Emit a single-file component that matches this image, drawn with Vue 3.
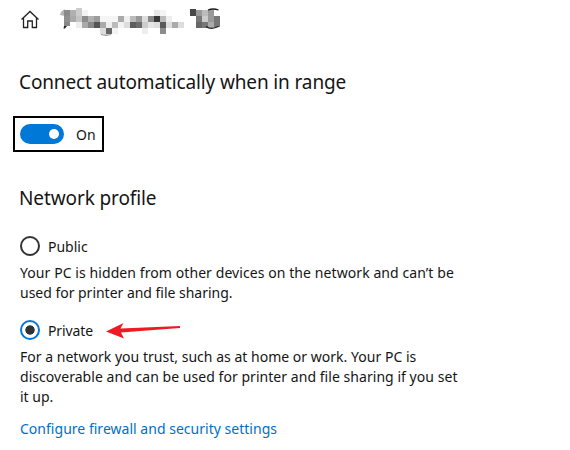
<script setup>
const cells = [
  [64,10,6,6,'#8a8a8a'],[70,10,6,6,'#b0b0b0'],[76,8,6,8,'#ccc'],[82,10,6,6,'#f3f3f3'],
  [64,16,6,6,'#909090'],[70,16,6,6,'#aaa'],[76,16,6,6,'#c4c4c4'],[82,16,6,6,'#8c8c8c'],[88,16,6,6,'#b0b0b0'],[94,16,6,6,'#9c9c9c'],[100,16,18,6,'#f5f5f5'],[118,16,6,6,'#aaa'],
  [64,22,6,4,'#888'],[76,22,6,6,'#eee'],[82,22,6,6,'#aaa'],[88,22,6,6,'#888'],[94,22,6,6,'#555'],[100,22,6,6,'#aaa'],[106,22,6,6,'#eee'],[112,22,6,6,'#bbb'],[118,22,6,6,'#f3f3f3'],
  [100,28,6,6,'#ddd'],[106,28,6,6,'#666'],[112,28,6,6,'#f3f3f3'],
  [124,16,6,6,'#f0f0f0'],[130,16,6,6,'#bbb'],[136,16,6,6,'#999'],[142,16,6,6,'#ddd'],[148,16,6,6,'#888'],[154,16,6,6,'#383838'],[160,16,6,6,'#bbb'],[166,16,6,6,'#eee'],
  [154,10,6,6,'#e8e8e8'],[160,10,6,6,'#f4f4f4'],
  [124,22,6,6,'#ddd'],[130,22,6,6,'#5c5c5c'],[136,22,6,6,'#6c6c6c'],[142,22,6,6,'#ccc'],[148,22,6,6,'#e5e5e5'],[154,22,6,6,'#ddd'],[160,22,6,6,'#5a5a5a'],[166,22,6,6,'#ddd'],[172,22,6,6,'#aaa'],[178,22,6,6,'#ddd'],
  [142,28,6,6,'#eee'],[160,28,6,6,'#8c8c8c'],
  [190,9,6,7,'#484848'],[196,10,6,6,'#999'],[202,10,6,6,'#bbb'],[208,10,6,6,'#999'],
  [196,16,6,6,'#777'],[202,16,6,6,'#ccc'],[208,16,6,6,'#999'],[214,16,6,6,'#777'],
  [196,22,6,6,'#666'],[202,22,6,6,'#777'],[208,22,6,5,'#aaa'],[214,22,6,5,'#777']
]
</script>

<template>
  <main class="page">
    <header class="top">
      <svg width="570" height="42" viewBox="0 0 570 42">
        <path d="M21.5 19.5 30 11.5 38.5 19.5M23.5 18V27.5H27.7V21H32.3V27.5H36.5V18" fill="none" stroke="#222" stroke-width="1.3" />
        <path d="M60 15Q61 10 65 9.5V16Z" fill="#b5b5b5" />
        <path d="M64 26H67L65 28.5H63.5Z" fill="#222" />
        <path d="M101 34.5Q106 36 111 34.5" fill="none" stroke="#999" stroke-width="1.3" />
        <rect v-for="(c, i) in cells" :key="i" :x="c[0]" :y="c[1]" :width="c[2]" :height="c[3]" :fill="c[4]" />
        <path d="M208 10Q213 8 218.5 10M206 26.5Q211 30 218.5 26.5" fill="none" stroke="#1a1a1a" stroke-width="1.3" />
      </svg>
    </header>
    <h2><span class="t1">Connect automatically when in range</span></h2>
    <div class="toggle"><i class="switch"><b></b></i><span class="label">On</span></div>
    <h2 class="h2"><span class="t2">Network profile</span></h2>
    <div class="radio"><i class="ring"></i><span class="label">Public</span></div>
    <p><span class="l1">Your PC is hidden from other devices on the network and can’t be</span><br><span class="l2">used for printer and file sharing.</span></p>
    <div class="radio second"><i class="ring on"></i><span class="label private">Private</span>
      <svg class="arrow" width="76" height="18" viewBox="105 322 76 18"><path d="M106 331.5 123.5 323 120.5 328.5 180 326V328L121 332.5 124 338.5Z" fill="#ed1c24" /></svg>
    </div>
    <p><span class="l3">For a network you trust, such as at home or work. Your PC is</span><br><span class="l4">discoverable and can be used for printer and file sharing if you set</span><br><span>it up.</span></p>
    <a><span class="l3">Configure firewall and security settings</span></a>
  </main>
</template>

<style>
body { margin: 0; background: #fff; }
</style>
<style scoped>
.page { width: 570px; height: 450px; overflow: hidden; background: #fff; color: #151515; font: 14px/20px "Noto Sans", sans-serif; white-space: nowrap; font-variant-ligatures: common-ligatures; }
.top { height: 42px; }
.top svg { display: block; }
h2 { font-size: 19px; line-height: 28px; font-weight: 400; margin: 0 0 0 19px; padding-top: 26px; }
.t1 { letter-spacing: -.13px; }
.t2 { letter-spacing: -.11px; }
.l1 { letter-spacing: .08px; }
.l2 { letter-spacing: -.02px; }
.l3 { letter-spacing: .02px; }
.l4 { letter-spacing: .045px; }
.toggle { box-sizing: border-box; width: 91px; height: 36px; margin: 20px 0 0 13px; border: 2px solid #000; padding-left: 5px; display: flex; align-items: center; gap: 12px; }
.switch { width: 44px; height: 20px; border-radius: 10px; background: #0078d7; display: flex; align-items: center; justify-content: flex-end; }
.switch b { width: 10px; height: 10px; border-radius: 5px; background: #fff; margin-right: 5px; }
.h2 { padding-top: 32px; }
.radio { display: flex; align-items: center; height: 20px; margin: 24px 0 0 20px; gap: 8px; }
.label { padding-top: 2px; }
.private { letter-spacing: -.12px; }
.ring { box-sizing: border-box; width: 20px; height: 20px; border: 2px solid #333; border-radius: 50%; }
.ring.on { border-color: #0078d7; background: radial-gradient(circle, #333 4.3px, transparent 5px); }
.arrow { margin: 2px 0 0 4px; }
p { margin: 7px 0 0 20px; }
.second { margin-top: 17px; }
a { display: block; margin: 12px 0 0 20px; color: #0070c6; }
</style>
